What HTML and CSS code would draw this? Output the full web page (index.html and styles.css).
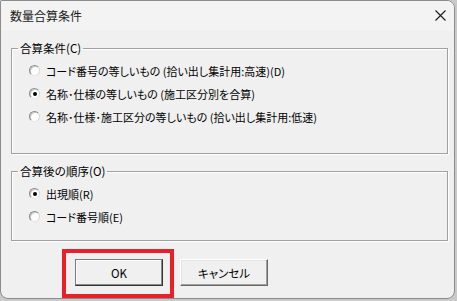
FILE: index.html
```html
<!DOCTYPE html>
<html lang="ja">
  <head>
    <meta charset="UTF-8" />
    <meta name="viewport" content="width=device-width, initial-scale=1.0" />
    <title>数量合算条件</title>
    <link rel="stylesheet" href="styles.css">
  </head>

  <body>
    <div class="window">
      <div class="titlebar">
        <span class="title">数量合算条件</span>
        <span class="close">
          <svg width="11" height="11" viewBox="0 0 11 11">
            <path d="M0.5 0.5 L10.5 10.5 M10.5 0.5 L0.5 10.5" stroke="#1a1a1a" stroke-width="1.1" fill="none" />
          </svg>
        </span>
      </div>

      <div class="client">
        <fieldset class="group group-first">
          <legend>合算条件(C)</legend>
          <label class="option"><span class="radio"></span>コード番号の等しいもの (拾い出し集計用:高速)(D)</label>
          <label class="option"><span class="radio checked"></span>名称･仕様の等しいもの (施工区分別を合算)</label>
          <label class="option"><span class="radio"></span>名称･仕様･施工区分の等しいもの (拾い出し集計用:低速)</label>
        </fieldset>

        <fieldset class="group group-second">
          <legend>合算後の順序(O)</legend>
          <label class="option"><span class="radio checked"></span>出現順(R)</label>
          <label class="option"><span class="radio"></span>コード番号順(E)</label>
        </fieldset>

        <div class="buttons">
          <span class="highlight">
            <button class="btn btn-default">OK</button>
          </span>
          <button class="btn">キャンセル</button>
        </div>
      </div>
    </div>
  </body>
</html>
```

FILE: styles.css
```css
body {
  margin: 0;
  padding: 0;
  background-color: #c9c9c9;
  font-family: "Noto Sans CJK JP", "Liberation Sans", sans-serif;
  font-size: 11px;
  color: #000;
}

.window {
  width: 453px;
  height: 297px;
  border: 1px solid #8c8c8c;
  border-radius: 2px 8px 8px 8px;
  background-color: #f0f0f0;
  overflow: hidden;
}

.titlebar {
  height: 30px;
  background-color: #f3f3f3;
  display: flex;
  align-items: center;
  justify-content: space-between;
  padding: 0 6px 0 9px;
}

.title {
  font-size: 12px;
  color: #1a1a1a;
  margin-top: -1px;
}

.close {
  display: flex;
  margin-right: 2px;
  margin-top: -1px;
}

.group {
  margin: 9px 6px 0 10px;
  padding: 3px 0 0 0;
  border: 1px solid #a0a0a0;
  box-shadow: 1px 1px 0 #fff, inset 1px 1px 0 #fff;
  min-width: 0;
}

.group legend {
  padding: 0 2px;
  margin-left: 6px;
  line-height: 16px;
  font-size: 11.5px;
}

.group-first {
  padding-bottom: 25px;
}

.group-second {
  padding-bottom: 12px;
}

.option {
  display: flex;
  align-items: center;
  height: 23px;
  margin-left: 17px;
  line-height: 16px;
  font-feature-settings: "palt";
  white-space: nowrap;
}

.radio {
  width: 11px;
  height: 11px;
  box-sizing: border-box;
  border: 1px solid #9a9a9a;
  border-color: #8a8a8a #d8d8d8 #e6e6e6 #8a8a8a;
  border-radius: 50%;
  background-color: #fff;
  box-shadow: inset 1px 1px 0 #c8c8c8;
  margin-right: 6px;
  display: flex;
  align-items: center;
  justify-content: center;
}

.radio.checked::after {
  content: "";
  width: 4px;
  height: 4px;
  border-radius: 50%;
  background-color: #000;
}

.buttons {
  display: flex;
  gap: 17px;
  margin: 18px 0 0 74px;
}

.highlight {
  position: relative;
  display: flex;
}

.highlight::after {
  content: "";
  position: absolute;
  left: -13px;
  top: -10px;
  width: 104px;
  height: 41px;
  border: 4px solid #e8202a;
}

.btn {
  width: 88px;
  height: 27px;
  padding: 0;
  font-family: "Noto Sans CJK JP", "Liberation Sans", sans-serif;
  font-size: 11.5px;
  font-feature-settings: "palt";
  color: #000;
  background-color: #f0f0f0;
  border: 1px solid;
  border-color: #fff #696969 #696969 #fff;
  box-shadow: inset -1px -1px 0 #a0a0a0, inset 1px 1px 0 #e3e3e3;
}

.btn-default {
  border-color: #7a7a7a #333 #333 #7a7a7a;
  box-shadow: inset -1px -1px 0 #8a8a8a, inset 1px 1px 0 #fff;
}
```
